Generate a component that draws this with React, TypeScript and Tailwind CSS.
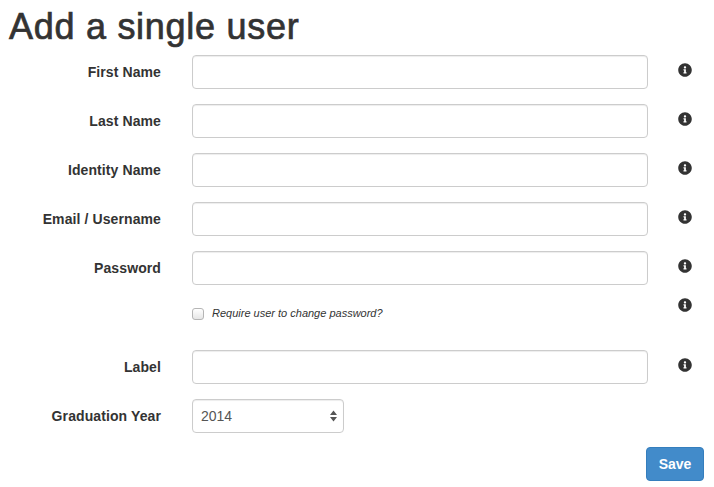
import { FaInfoCircle } from "react-icons/fa";

const FONT = "font-['Liberation_Sans',Arial,sans-serif]";

function Info() {
  return (
    <div className="w-[66px] pl-[30px] text-[#333333]">
      <FaInfoCircle size={14} />
    </div>
  );
}

function Label({ text }: { text: string }) {
  return (
    <label className="w-[161px] mr-[31px] shrink-0 text-right text-[14px] font-bold tracking-[0.1px] leading-[20px] pt-[7px] text-[#333333]">
      {text}
    </label>
  );
}

function TextRow({ label }: { label: string }) {
  return (
    <div className="flex mb-[15px]">
      <Label text={label} />
      <input
        type="text"
        className="w-[456px] h-[34px] shrink-0 rounded-[4px] border border-[#cccccc] bg-white shadow-[inset_0_1px_1px_rgba(0,0,0,0.075)]"
      />
      <div className="pt-[8px]">
        <Info />
      </div>
    </div>
  );
}

export default function App() {
  return (
    <div className={`${FONT} w-[714px] h-[487px] overflow-hidden bg-white text-[#333333]`}>
      <h1 className="pl-[9px] pt-[7px] text-[36px] leading-[40px] font-medium tracking-[0.72px] [-webkit-text-stroke:0.7px_#333333] mb-[8px]">
        Add a single user
      </h1>

      <TextRow label="First Name" />
      <TextRow label="Last Name" />
      <TextRow label="Identity Name" />
      <TextRow label="Email / Username" />
      <TextRow label="Password" />

      <div className="flex h-[52px] -mt-[2px]">
        <div className="w-[192px] shrink-0" />
        <div className="w-[456px] shrink-0 flex items-start pt-[7px]">
          <input
            type="checkbox"
            className="w-[12px] h-[12px] mt-[3px] mr-[8px] appearance-none rounded-[3px] border border-[#b5b5b5] bg-gradient-to-b from-[#ffffff] to-[#e6e6e6]"
          />
          <span className="text-[11px] italic leading-[16px] text-[#333333]">Require user to change password?</span>
        </div>
        <Info />
      </div>

      <TextRow label="Label" />

      <div className="flex mb-[14px]">
        <Label text="Graduation Year" />
        <div className="relative w-[152px] h-[34px]">
          <select className="w-full h-full appearance-none rounded-[4px] border border-[#cccccc] bg-white pl-[8px] text-[14px] text-[#555555] shadow-[inset_0_1px_1px_rgba(0,0,0,0.075)]">
            <option>2014</option>
          </select>
          <svg className="absolute right-[7px] top-[11px] pointer-events-none" width="7" height="12" viewBox="0 0 7 12">
            <path d="M3.5 0.5L7 5H0zM0 7h7l-3.5 4.5z" fill="#555555" />
          </svg>
        </div>
      </div>

      <div className="flex justify-end pr-[10px]">
        <button className="w-[58px] h-[34px] rounded-[4px] border border-[#357ebd] bg-[#428bca] text-[14px] font-bold text-white">
          Save
        </button>
      </div>
    </div>
  );
}
